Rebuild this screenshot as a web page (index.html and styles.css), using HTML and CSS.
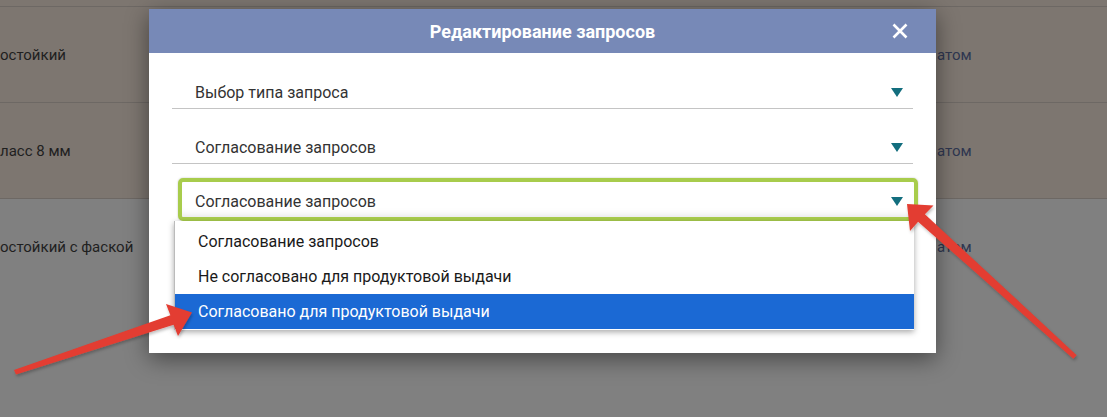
FILE: index.html
```html
<!DOCTYPE html>
<html lang="ru">
<head>
<meta charset="utf-8">
<title>Редактирование запросов</title>
<link rel="stylesheet" href="styles.css">
</head>
<body>
<div class="page">
  <div class="row row-top"></div>
  <div class="row tan"><div class="c1">остойкий</div><div class="c2">атом</div></div>
  <div class="row tan"><div class="c1">ласс 8 мм</div><div class="c2">атом</div></div>
  <div class="row gray"><div class="c1">остойкий с фаской</div><div class="c2">атом</div></div>
</div>

<div class="modal">
  <div class="modal-head">
    <span></span>
    <h1 class="modal-title">Редактирование запросов</h1>
    <svg class="close" width="16" height="16" viewBox="0 0 16 16"><path d="M1.5 1.5L14.5 14.5M14.5 1.5L1.5 14.5" stroke="#fff" stroke-width="2.6" fill="none"/></svg>
  </div>
  <div class="modal-body">
    <div class="field">
      <span class="field-text">Выбор типа запроса</span>
      <span class="caret"></span>
    </div>
    <div class="field">
      <span class="field-text">Согласование запросов</span>
      <span class="caret"></span>
    </div>
    <div class="select-wrap">
      <div class="select">
        <span class="select-text">Согласование запросов</span>
        <span class="caret"></span>
      </div>
      <ul class="menu">
        <li class="item">Согласование запросов</li>
        <li class="item">Не согласовано для продуктовой выдачи</li>
        <li class="item active">Согласовано для продуктовой выдачи</li>
      </ul>
    </div>
  </div>
</div>

<svg class="arrows" width="1107" height="417" viewBox="0 0 1107 417">
  <defs>
    <filter id="sh" x="-10%" y="-10%" width="120%" height="130%">
      <feDropShadow dx="1" dy="2" stdDeviation="1.5" flood-color="#000" flood-opacity="0.25"/>
    </filter>
  </defs>
  <g fill="#e33c30" filter="url(#sh)">
    <polygon points="14,370 170.4,315.3 166,304 192,312.5 178,336 173.6,324.7 16,374.5"/>
    <polygon points="907,204 933.5,205.5 924.9,214.3 1076.7,355.2 1073.3,358.8 918.1,221.7 910,231"/>
  </g>
</svg>
</body>
</html>
```
FILE: styles.css
```css
* { box-sizing: border-box; }
html, body { margin: 0; padding: 0; }
body {
  width: 1107px;
  height: 417px;
  overflow: hidden;
  background: #808080;
  font-family: Roboto, "Liberation Sans", sans-serif;
  position: relative;
}
.page { display: flex; flex-direction: column; }
.row {
  display: flex;
  align-items: center;
  height: 96px;
  border-bottom: 1px solid #6d6864;
  font-size: 15px;
  color: #1f1f1f;
}
.row-top { height: 7px; background: #7d7670; }
.tan { background: #7d7670; }
.gray { background: #808080; border-bottom: none; }
.c1 { width: 937px; flex: none; }
.c2 { color: #2f3750; }

.modal {
  position: absolute;
  left: 149px;
  top: 9px;
  width: 787px;
  height: 344px;
  background: #fff;
  box-shadow: 0 6px 22px rgba(0,0,0,0.45);
}
.modal-head {
  height: 44px;
  background: #7789b7;
  display: grid;
  grid-template-columns: 1fr auto 1fr;
  align-items: center;
}
.modal-title {
  margin: 0;
  font-size: 18px;
  font-weight: 700;
  color: #fff;
}
.close { justify-self: end; margin-right: 28px; }

.modal-body { padding: 25px 23px 0 23px; }
.field {
  height: 31px;
  padding: 4px 10px 6px 23px;
  border-bottom: 1px solid #c4c4c4;
  display: flex;
  align-items: center;
  justify-content: space-between;
  margin-bottom: 24px;
  font-size: 16px;
  color: #333;
}
.field + .field { margin-bottom: 14px; }
.caret {
  width: 0; height: 0;
  border-left: 6px solid transparent;
  border-right: 6px solid transparent;
  border-top: 9px solid #136e7e;
}
.select-wrap { position: relative; }
.select {
  margin: 0 -5px 0 6px;
  height: 43px;
  border: 4px solid #a8cc4c;
  border-radius: 5px;
  padding: 4px 11px 0 13px;
  display: flex;
  align-items: center;
  justify-content: space-between;
  font-size: 16px;
  color: #333;
  box-shadow: 0 0 2px rgba(0,0,0,0.25), inset 0 -7px 8px -6px rgba(0,0,0,0.12);
}
.menu {
  position: absolute;
  left: 2px;
  top: 43px;
  width: 740px;
  margin: 0;
  padding: 3px 0 1px 0;
  list-style: none;
  background: #fff;
  box-shadow: 0 2px 6px rgba(0,0,0,0.35);
  border-left: 1px solid #bbb;
}
.item {
  height: 35px;
  display: flex;
  align-items: center;
  padding-left: 23px;
  font-size: 16px;
  color: #1a1a1a;
}
.item.active { background: #1b69d4; color: #fff; }

.arrows { position: absolute; left: 0; top: 0; pointer-events: none; }
```
